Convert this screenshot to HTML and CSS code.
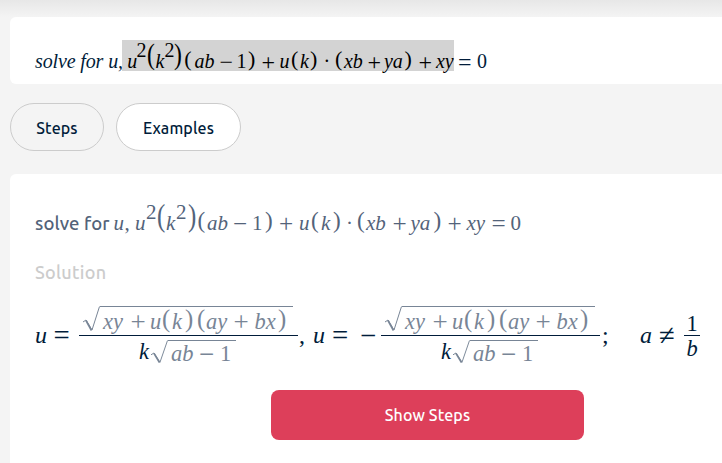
FILE: index.html
```html
<!DOCTYPE html>
<html lang="en">
<head>
<meta charset="utf-8">
<title>Equation solver</title>
<link rel="stylesheet" href="styles.css">
</head>
<body>
<div class="topshade"></div>
<main>
<section class="card query">
<span class="prompt">solve for u,</span>
<span class="selected"><i>u</i><b><sup>2</sup></b><b><em class="big">(</em></b><i>k</i><b><sup>2</sup></b><b><em class="big">)</em></b><b><em>(</em></b><i>ab</i><b><s>−</s></b><b>1</b><b><em>)</em></b><b><s>+</s></b><i>u</i><b><em>(</em></b><i>k</i><b><em>)</em></b><b>·</b><b><em>(</em></b><i>xb</i><b><s>+</s></b><i>ya</i><b><em>)</em></b><b><s>+</s></b><i>xy</i></span>
<span class="tail"><b><s>=</s></b><b>0</b></span>
</section>
<nav class="tabs"><button class="tab steps">Steps</button><button class="tab examples">Examples</button></nav>
<section class="card result">
<div class="problem"><span class="words">solve for</span><i>u</i><b>,</b><i>u</i><b><sup>2</sup></b><b><em class="big">(</em></b><i>k</i><b><sup>2</sup></b><b><em class="big">)</em></b><b><em>(</em></b><i>ab</i><b><s>−</s></b><b>1</b><b><em>)</em></b><b><s>+</s></b><i>u</i><b><em>(</em></b><i>k</i><b><em>)</em></b><b>·</b><b><em>(</em></b><i>xb</i><b><s>+</s></b><i>ya</i><b><em>)</em></b><b><s>+</s></b><i>xy</i><b><s>=</s></b><b>0</b></div>
<h2>Solution</h2>
<div class="answer">
<i>u</i><b><s>=</s></b>
<div class="frac">
<div class="num"><svg class="root" width="17" height="27" viewBox="0 0 17 27"><path d="M0 16l3-2 6 10L16.500.5" /><path class="thick" d="M3 14.500l5.500 10"/></svg><div class="radicand top"><i>xy</i><b><s>+</s></b><i>u</i><b><em>(</em></b><i>k</i><b><em>)</em></b><b><em>(</em></b><i>ay</i><b><s>+</s></b><i>bx</i><b><em>)</em></b></div></div>
<div class="den"><i class="factor">k</i><svg class="root" width="17" height="25" viewBox="0 0 17 27" preserveAspectRatio="none"><path d="M0 16l3-2 6 10L16.500.5"/><path class="thick" d="M3 14.500l5.500 10"/></svg><div class="radicand low"><i>ab</i><b><s>−</s></b><b>1</b></div></div>
</div>
<b>,</b><i>u</i><b><s>=</s></b><b><s>−</s></b>
<div class="frac">
<div class="num"><svg class="root" width="17" height="27" viewBox="0 0 17 27"><path d="M0 16l3-2 6 10L16.500.5"/><path class="thick" d="M3 14.500l5.500 10"/></svg><div class="radicand top"><i>xy</i><b><s>+</s></b><i>u</i><b><em>(</em></b><i>k</i><b><em>)</em></b><b><em>(</em></b><i>ay</i><b><s>+</s></b><i>bx</i><b><em>)</em></b></div></div>
<div class="den"><i class="factor">k</i><svg class="root" width="17" height="25" viewBox="0 0 17 27" preserveAspectRatio="none"><path d="M0 16l3-2 6 10L16.500.5"/><path class="thick" d="M3 14.500l5.500 10"/></svg><div class="radicand low"><i>ab</i><b><s>−</s></b><b>1</b></div></div>
</div>
<b>;</b><i>a</i><b><s>≠</s></b>
<div class="frac small"><b>1</b><i>b</i></div>
</div>
<button class="show">Show Steps</button>
</section>
</main>
</body>
</html>
```
FILE: styles.css
```css
* { box-sizing: border-box; }
body { margin: 0; height: 463px; overflow: hidden; background: #f4f4f4; color: #001c3a; font-family: "Liberation Serif", serif; }
button { font: 500 16px Ubuntu, "Noto Sans", sans-serif; letter-spacing: .12px; }
b { font-weight: normal; }
s { text-decoration: none; font-size: 1.2em; line-height: 0; vertical-align: -1.5px; }
em { display: inline-block; font-style: normal; font-size: 1.1em; line-height: 0; vertical-align: 2px; }
.big { font-size: 1.48em; vertical-align: 4px; transform: scaleX(.8); transform-origin: left; }
sup { font-size: 1em; line-height: 0; vertical-align: 11px; }
.topshade { height: 17px; background: linear-gradient(#e7e7e7, #f4f4f4); }
main { padding-left: 10px; }
.card { background: #fff; border-radius: 6px 0 0 6px; }
.query { height: 67px; padding: 23px 0 0 25px; display: flex; font-size: 20px; white-space: nowrap; }
.query > span { height: 31px; line-height: 42px; }
.prompt { width: 87px; font-style: italic; letter-spacing: -.13px; }
.selected, .tail { display: grid; align-items: baseline; }
.selected { width: 332px; padding-left: 5.2px; background: #d3d3d3; color: #000; grid-template-columns: 9.3px 11px 8px 9px 10px 9.8px 10.2px 25px 17px 11.5px 13.5px 18px 11.5px 9px 10px 13.5px 11.5px 9px 23.5px 16.5px 20.5px 14px 17.5px 18px; }
.tail { padding-left: 4px; grid-template-columns: 19px 12px; }
.tabs { display: flex; gap: 12px; margin: 19px 0 23px; }
.tab { height: 48px; padding: 1px 0 0; border: 1px solid #ccc; border-radius: 24px; color: #001c3a; }
.steps { width: 94px; background: #f4f4f4; }
.examples { width: 125px; background: #fff; }
.result { height: 300px; padding: 31px 0 0 25px; }
.problem { display: grid; align-items: baseline; height: 36px; line-height: 36px; font-size: 21px; color: #53637a; white-space: nowrap; grid-template-columns: 78.5px 11px 10.5px 11px 11px 9px 10px 12px 9.500px 9.500px 26px 19px 13px 14px 20px 12px 10px 12px 13px 11px 9px 26.500px 18px 23px 14px 19px 25px 19px 12px; }
.words { font: 500 18.500px/36px Ubuntu, "Noto Sans", sans-serif; letter-spacing: .1px; }
h2 { margin: 13px 0 0; height: 36px; font: 500 18px/36px Ubuntu, "Noto Sans", sans-serif; letter-spacing: .3px; color: #ccc; }
.answer { display: grid; grid-template-columns: 18.500px 25.500px 220px 14px 19px 28px 21px 221px 38px 19px 25px 16px; height: 76px; margin-top: 12px; line-height: 48px; font-size: 24px; white-space: nowrap; }
.answer > i, .answer > b { padding-top: 9px; }
.frac { display: flex; flex-direction: column; padding-top: 4px; line-height: 24px; font-size: 22.500px; width: 219px; }
.num { display: flex; height: 30px; padding-left: 4px; border-bottom: 1px solid #001c3a; color: #788596; }
.den { display: flex; height: 30px; padding: 4px 0 0 60px; color: #788596; }
.root { fill: none; stroke: currentColor; stroke-width: 1; flex: none; }
.root .thick { stroke-width: 1.7; }
.radicand { display: grid; align-items: baseline; border-top: 1px solid currentColor; height: 24px; line-height: 30px; }
.top { width: 193px; padding-left: 3px; grid-template-columns: 27.500px 19.500px 12px 10px 13px 12px 9px 27.500px 21px 23.500px 8px; }
.low { width: 68px; padding-left: 3px; line-height: 26px; grid-template-columns: 28px 21px 12px; }
.factor { width: 12px; color: #001c3a; }
.small { align-items: center; width: 16px; }
.small b { width: 16px; height: 30px; line-height: 36px; text-align: center; border-bottom: 1px solid #001c3a; }
.small i { line-height: 25px; }
.show { display: block; width: 313px; height: 50px; margin: 12px 0 0 236px; border: 0; border-radius: 8px; background: #dd3f5a; color: #fff; }
```
